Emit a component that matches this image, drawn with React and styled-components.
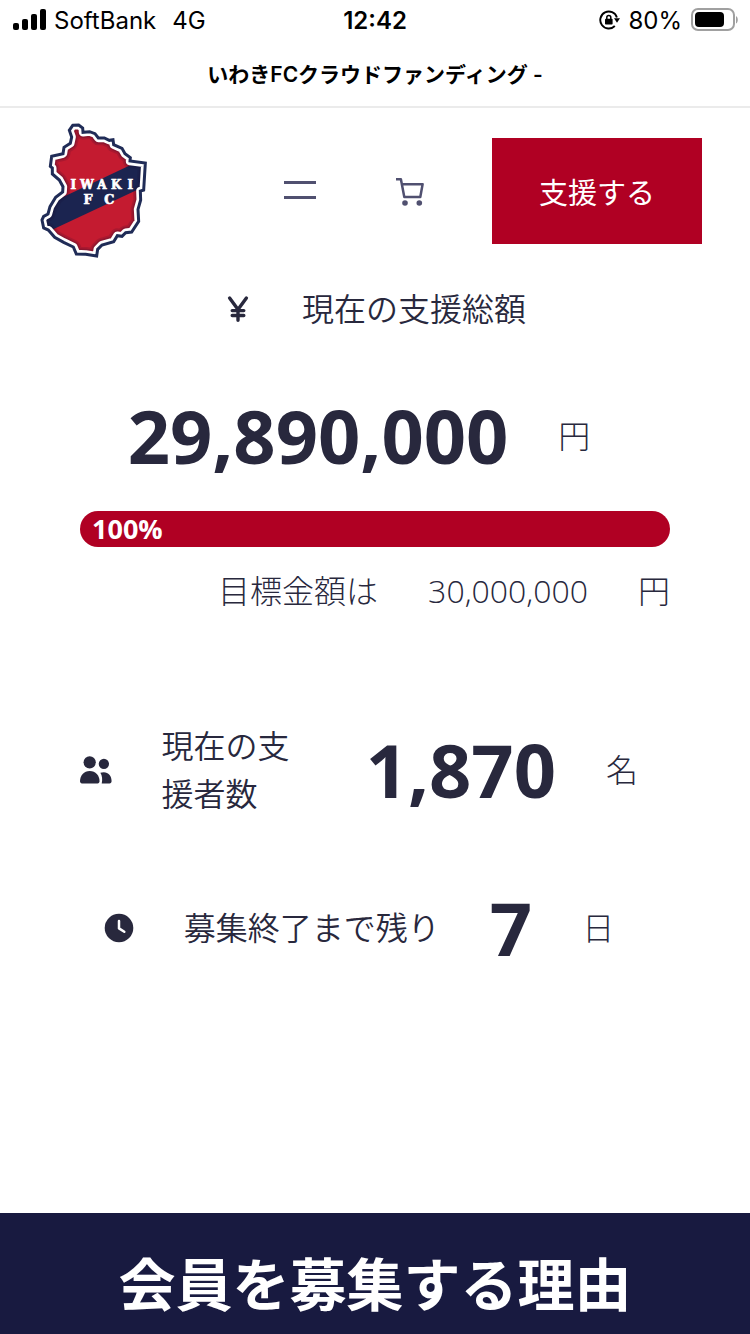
import React from "react";
import styled, { createGlobalStyle } from "styled-components";

const GlobalStyle = createGlobalStyle`
  * {
    box-sizing: border-box;
  }
  body {
    margin: 0;
    background-color: #ffffff;
    color: #28283d;
    font-family: "Open Sans", "Noto Sans CJK JP", sans-serif;
  }
`;

// full height column, the dark section takes whatever is left at the bottom
const Page = styled.div`
  display: flex;
  flex-direction: column;
  min-height: 100vh;
`;

const BrowserBar = styled.div`
  border-bottom: 2px solid #ebebeb;
  color: #000000;
  font-family: Inter, "Noto Sans CJK JP", sans-serif;
`;

const StatusBar = styled.div`
  display: grid;
  grid-template-columns: 1fr auto 1fr;
  align-items: center;
  height: 40px;
  padding: 0 12px;
  font-size: 24px;
`;

const StatusGroup = styled.div`
  display: flex;
  align-items: center;
  justify-content: ${(props) => (props.$end ? "flex-end" : "flex-start")};
  gap: 8px;
`;

const Network = styled.span`
  padding-left: 8px;
`;

const Clock = styled.time`
  font-weight: 600;
`;

const PageTitle = styled.div`
  display: flex;
  align-items: center;
  justify-content: center;
  height: 66px;
  font-size: 21px;
  font-weight: 600;
`;

const Header = styled.header`
  display: flex;
  align-items: center;
  justify-content: space-between;
  padding: 14px 48px 14px 40px;
`;

const LogoLink = styled.a`
  display: flex;
`;

const HeaderActions = styled.div`
  display: flex;
  align-items: center;
`;

const IconButton = styled.button`
  display: flex;
  padding: 0;
  margin-right: ${(props) => props.$space}px;
  border: none;
  background: none;
  color: #505070;
`;

const SupportButton = styled.button`
  width: 210px;
  height: 106px;
  padding: 0;
  border: none;
  background-color: #b00023;
  color: #ffffff;
  font-family: inherit;
  font-size: 29px;
`;

const Main = styled.main`
  display: flex;
  flex-direction: column;
  padding: 11px 80px 0;
  font-size: 32px;
  line-height: 48px;
`;

const Row = styled.div`
  display: flex;
  align-items: center;
  justify-content: ${(props) => (props.$end ? "flex-end" : "center")};
  gap: 50px;
  margin-top: ${(props) => props.$top || 0}px;
  padding-right: ${(props) => (props.$inset ? "32px" : "0")};
`;

const Amount = styled.strong`
  font-size: 74px;
  font-weight: 700;
  line-height: 110px;
`;

const Label = styled.span`
  width: ${(props) => (props.$narrow ? "156px" : "auto")};
  font-weight: 350;
`;

const Light = styled.span`
  font-weight: 300;
`;

const ProgressTrack = styled.div`
  height: 36px;
  margin-top: 20px;
  border-radius: 18px;
  background-color: #eeeeee;
  overflow: hidden;
`;

const ProgressFill = styled.div`
  height: 100%;
  padding-left: 12px;
  background-color: #b00023;
  color: #ffffff;
  font-size: 27px;
  font-weight: 700;
  line-height: 36px;
`;

const Reason = styled.section`
  flex: 1;
  margin-top: 230px;
  padding-top: 29px;
  background-color: #181a40;
  color: #ffffff;
  text-align: center;
`;

const ReasonHeading = styled.h2`
  margin: 0;
  font-size: 57px;
  font-weight: 700;
  line-height: 84px;
`;

const Signal = () => (
  <svg width="34" height="22" viewBox="0 0 34 22" aria-hidden="true">
    <rect x="1" y="14" width="6" height="7" rx="2" />
    <rect x="10" y="10" width="6" height="11" rx="2" />
    <rect x="19" y="5" width="6" height="16" rx="2" />
    <rect x="28" y="0" width="6" height="21" rx="2" />
  </svg>
);

const RotationLock = () => (
  <svg width="21" height="22" viewBox="0 0 21 22" aria-hidden="true">
    <path
      d="M17.9 8.5A8.500 8.500 0 1 0 15.800 17"
      fill="none"
      stroke="#000"
      strokeWidth="1.9"
    />
    <path d="M15 9.200h6l-3 4.600z" />
    <rect x="6" y="9.800" width="7.600" height="5.800" rx="0.800" />
    <path
      d="M7.800 10.500V8.600a2 2 0 0 1 4 0v1.900"
      fill="none"
      stroke="#000"
      strokeWidth="1.500"
    />
  </svg>
);

const Battery = () => (
  <svg width="48" height="24" viewBox="0 0 48 24" aria-hidden="true">
    <rect
      x="2"
      y="1"
      width="42"
      height="21"
      rx="6"
      fill="none"
      stroke="#a0a0a0"
      strokeWidth="2"
    />
    <rect x="5" y="4" width="29" height="15" rx="4" />
    <path d="M46 8c2.400 1.400 2.400 6.200 0 7.600z" fill="#a0a0a0" />
  </svg>
);

const MenuIcon = () => (
  <svg width="32" height="20" viewBox="0 0 32 20" aria-hidden="true">
    <path d="M0 0h32v3H0zM0 15h32v3H0z" fill="currentColor" />
  </svg>
);

const CartIcon = () => (
  <svg width="28" height="30" viewBox="0 0 28 30" aria-hidden="true">
    <path
      d="M0 3.200h4.900L8.300 21h16L26.600 8.200H6"
      fill="none"
      stroke="currentColor"
      strokeWidth="2.500"
      strokeLinejoin="round"
    />
    <circle cx="9" cy="27" r="2.800" fill="currentColor" />
    <circle cx="23.300" cy="27" r="2.800" fill="currentColor" />
  </svg>
);

const YenIcon = () => (
  <svg width="28" height="28" viewBox="0 0 28 28" aria-hidden="true">
    <path
      d="M5.600 3L14 14.500L22.400 3M14 14.500v10.700M8.200 15.600h11.600M8.200 20.500h11.600"
      fill="none"
      stroke="currentColor"
      strokeWidth="3.400"
      strokeLinecap="round"
      strokeLinejoin="round"
    />
  </svg>
);

const PeopleIcon = () => (
  <svg width="32" height="28" viewBox="0 0 32 28" aria-hidden="true">
    <g fill="currentColor">
      <circle cx="9.800" cy="6.200" r="6.200" />
      <circle cx="24.200" cy="7.800" r="5.200" />
      <path d="M0 25.500C0 19.500 4 15 9.900 15s9.900 4.500 9.900 10.500c0 1.300-.8 2.100-2 2.100H2c-1.200 0-2-.8-2-2.100z" />
      <path d="M20.600 16.800c1-.4 2.200-.6 3.500-.6 4.700 0 7.900 3.800 7.900 9 0 1.500-.8 2.400-2.100 2.400h-7.900c.9-3.800.5-7.900-1.400-10.800z" />
    </g>
  </svg>
);

const ClockIcon = () => (
  <svg width="30" height="30" viewBox="0 0 30 30" aria-hidden="true">
    <circle cx="15" cy="15" r="14.300" fill="currentColor" />
    <path
      d="M15 8v7.400l5.300 3.400"
      fill="none"
      stroke="#fff"
      strokeWidth="2.500"
      strokeLinecap="round"
      strokeLinejoin="round"
    />
  </svg>
);

const crest =
  "M128 30L146 29L158 38L159 51L179 49L195 55L205 68L223 68L238 75L249 73L251 88L276 99L285 115L301 127L300 137L346 143L341 224L331 227L332 254L324 282L326 318L305 350L287 352L276 363L262 361L251 379L216 389L203 402L200 422L167 417L139 416L130 395L101 381L74 366L55 344L41 338L36 314L41 303L54 296L60 274L77 246L98 230L99 214L88 194L67 176L67 158L61 153L65 123L99 115L102 96L121 84L125 65L118 45Z";

const Logo = () => (
  <svg
    width="108"
    height="138"
    viewBox="30 20 324 414"
    role="img"
    aria-label="IWAKI FC"
  >
    <defs>
      <clipPath id="crest">
        <path d={crest} />
      </clipPath>
    </defs>
    <g clipPath="url(#crest)">
      <path d={crest} fill="#c41b30" />
      <path d="M30 360V278L350 126V210Z" fill="#1b2450" />
      <g fill="none" strokeLinejoin="round">
        <path d={crest} stroke="#1b1030" strokeOpacity="0.15" strokeWidth="44" />
        <path d={crest} stroke="#1b1030" strokeOpacity="0.2" strokeWidth="34" />
        <path d={crest} stroke="#fff" strokeWidth="25" />
      </g>
    </g>
    <path d={crest} fill="none" stroke="#202c57" strokeWidth="9" />
    <g
      fill="#fff"
      stroke="#fff"
      strokeWidth="2"
      fontFamily="DejaVu Serif, serif"
      fontWeight="700"
      textAnchor="middle"
    >
      <text x="130 171 216 259 301" y="222" fontSize="36">
        IWAKI
      </text>
      <text x="174 238" y="265" fontSize="38">
        FC
      </text>
    </g>
  </svg>
);

const progress = 100;

const App = () => {
  return (
    <Page>
      <GlobalStyle />
      <BrowserBar>
        <StatusBar>
          <StatusGroup>
            <Signal />
            <span>SoftBank</span>
            <Network>4G</Network>
          </StatusGroup>
          <Clock>12:42</Clock>
          <StatusGroup $end>
            <RotationLock />
            <span>80%</span>
            <Battery />
          </StatusGroup>
        </StatusBar>
        <PageTitle>いわきFCクラウドファンディング -</PageTitle>
      </BrowserBar>
      <Header>
        <LogoLink href="#">
          <Logo />
        </LogoLink>
        <HeaderActions>
          <IconButton $space={80} aria-label="メニュー">
            <MenuIcon />
          </IconButton>
          <IconButton $space={68} aria-label="カート">
            <CartIcon />
          </IconButton>
          <SupportButton>支援する</SupportButton>
        </HeaderActions>
      </Header>
      <Main>
        <Row>
          <YenIcon />
          <Label>現在の支援総額</Label>
        </Row>
        <Row $inset $top={48}>
          <Amount>29,890,000</Amount>
          <Light>円</Light>
        </Row>
        <ProgressTrack>
          <ProgressFill style={{ width: `${progress}%` }}>
            {progress}%
          </ProgressFill>
        </ProgressTrack>
        <Row $end $top={20}>
          <Light>目標金額は</Light>
          <Light>30,000,000</Light>
          <Light>円</Light>
        </Row>
        <Row $inset $top={100}>
          <PeopleIcon />
          <Label $narrow>現在の支援者数</Label>
          <Amount>1,870</Amount>
          <Light>名</Light>
        </Row>
        <Row $inset $top={48}>
          <ClockIcon />
          <Label>募集終了まで残り</Label>
          <Amount>7</Amount>
          <Light>日</Light>
        </Row>
      </Main>
      <Reason>
        <ReasonHeading>会員を募集する理由</ReasonHeading>
      </Reason>
    </Page>
  );
};

export default App;
